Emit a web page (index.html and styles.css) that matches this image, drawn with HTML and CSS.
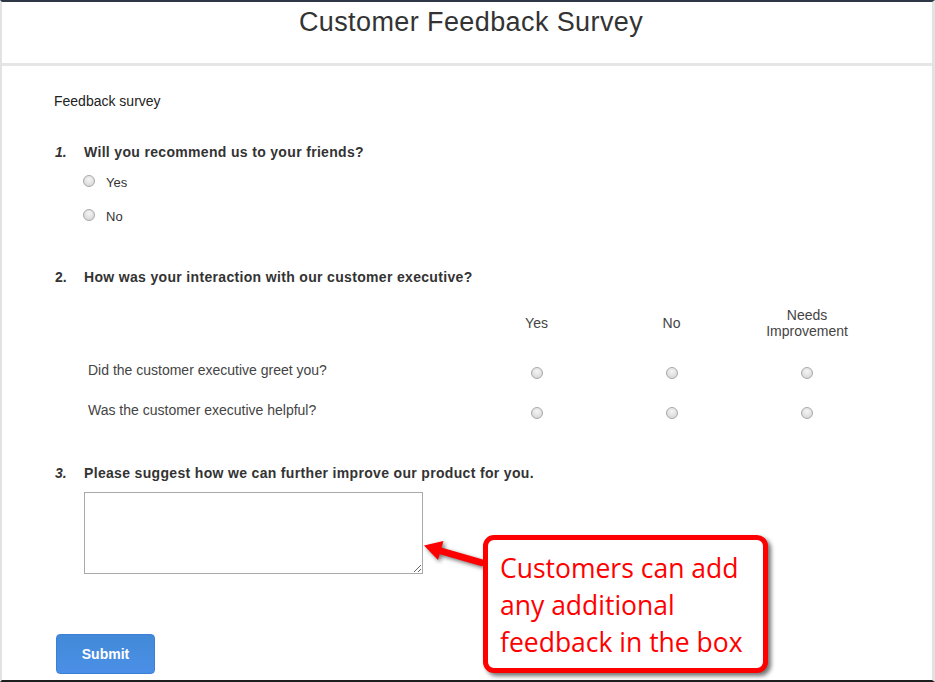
FILE: index.html
```html
<!DOCTYPE html>
<html>
<head>
<meta charset="utf-8">
<link rel="stylesheet" href="styles.css">
</head>
<body>
<div class="window">
  <header class="header"><h1 class="title">Customer Feedback Survey</h1></header>
  <main class="content">
    <p class="intro">Feedback survey</p>

    <section class="question q1">
      <div class="qline"><span class="num">1.</span><span class="qtext">Will you recommend us to your friends?</span></div>
      <div class="options">
        <label class="option"><input type="radio" class="radio" name="q1"><span>Yes</span></label>
        <label class="option"><input type="radio" class="radio" name="q1"><span>No</span></label>
      </div>
    </section>

    <section class="question q2">
      <div class="qline"><span class="num upright">2.</span><span class="qtext">How was your interaction with our customer executive?</span></div>
      <div class="matrix">
        <div class="mhead"></div>
        <div class="mhead">Yes</div>
        <div class="mhead">No</div>
        <div class="mhead">Needs<br>Improvement</div>

        <div class="mlabel">Did the customer executive greet you?</div>
        <div class="mcell"><input type="radio" class="radio" name="r1"></div>
        <div class="mcell"><input type="radio" class="radio" name="r1"></div>
        <div class="mcell"><input type="radio" class="radio" name="r1"></div>

        <div class="mlabel">Was the customer executive helpful?</div>
        <div class="mcell"><input type="radio" class="radio" name="r2"></div>
        <div class="mcell"><input type="radio" class="radio" name="r2"></div>
        <div class="mcell"><input type="radio" class="radio" name="r2"></div>
      </div>
    </section>

    <section class="question q3">
      <div class="qline"><span class="num">3.</span><span class="qtext">Please suggest how we can further improve our product for you.</span></div>
      <textarea class="answer"></textarea>
    </section>

    <button class="submit" type="button">Submit</button>
  </main>

  <svg class="arrow" width="80" height="40" viewBox="415 535 80 40">
    <line x1="481" y1="562.5" x2="441" y2="551" stroke="#ff0000" stroke-width="7" stroke-linecap="round"/>
    <polygon points="424,545.5 443.5,541 438,560" fill="#ff0000"/>
  </svg>
  <div class="callout">Customers can add any additional feedback in the box</div>
</div>
</body>
</html>
```

FILE: styles.css
```css
* { box-sizing: border-box; }
html, body { margin: 0; padding: 0; background: #fff; }
body { font-family: "Liberation Sans", Arial, sans-serif; color: #333; }

.window {
  position: relative;
  width: 935px;
  height: 682px;
  overflow: hidden;
  border-top: 2px solid #2d3745;
  border-bottom: 2px solid #1e1e1e;
  border-left: 2px solid #e2e2e2;
  border-right: 3px solid #e2e2e2;
}

.header {
  height: 64px;
  border-bottom: 3px solid #e6e6e6;
  padding-top: 5px;
  padding-left: 8px;
}
.title {
  margin: 0;
  text-align: center;
  font-weight: normal;
  font-size: 27px;
  letter-spacing: 0.4px;
  line-height: 30px;
  color: #333;
}

.content {
  padding: 25px 0 0 52px;
}
.intro {
  margin: 0;
  font-size: 14px;
  line-height: 20px;
  color: #222;
}

.question { margin-top: 31px; }
.q2 { margin-top: 40px; }
.q3 { margin-top: 32px; }

.qline {
  display: flex;
  font-size: 14px;
  line-height: 20px;
  font-weight: bold;
  letter-spacing: 0.33px;
  color: #333;
}
.num {
  width: 30px;
  padding-left: 1px;
  font-style: italic;
  letter-spacing: 0;
}
.num.upright { font-style: normal; }

.options {
  display: flex;
  flex-direction: column;
  gap: 14px;
  margin-top: 11px;
  padding-left: 29px;
}
.option {
  display: flex;
  align-items: center;
  height: 20px;
  font-size: 13px;
  line-height: 20px;
  color: #333;
}
.option .radio { margin-top: -4px; }
.option span { margin-left: 11px; }

.radio {
  appearance: none;
  -webkit-appearance: none;
  margin: 0;
  width: 12px;
  height: 12px;
  border-radius: 50%;
  border: 1px solid #a8a8a8;
  background: radial-gradient(circle at 50% 35%, #f4f4f4 0%, #dcdcdc 70%, #cfcfcf 100%);
}

.matrix {
  display: grid;
  grid-template-columns: 381px 135px 135px 136px;
  grid-template-rows: 56px 40px 40px;
  margin-top: 8px;
  padding-left: 34px;
  align-items: center;
}
.mhead {
  text-align: center;
  font-size: 14px;
  line-height: 16px;
  color: #444;
}
.mlabel {
  font-size: 14px;
  line-height: 20px;
  color: #444;
  padding-bottom: 2px;
}
.mcell {
  display: flex;
  justify-content: center;
  padding-top: 3px;
}

.answer {
  display: block;
  margin: 9px 0 0 30px;
  width: 339px;
  height: 82px;
  border: 1px solid #a9a9a9;
  resize: both;
  padding: 2px;
  font-family: "Liberation Sans", Arial, sans-serif;
}

.submit {
  display: block;
  margin: 60px 0 0 2px;
  width: 99px;
  height: 40px;
  border: 1px solid #3b7fd6;
  border-radius: 4px;
  background: linear-gradient(#428ad8, #4a8fe6);
  color: #fff;
  font-family: "Liberation Sans", Arial, sans-serif;
  font-size: 14px;
  font-weight: bold;
}

.arrow {
  position: absolute;
  left: 413px;
  top: 533px;
  filter: drop-shadow(2px 2px 2px rgba(0,0,0,0.55));
}

.callout {
  position: absolute;
  left: 481px;
  top: 533px;
  width: 285px;
  height: 138px;
  border: 5px solid #ff0000;
  border-radius: 11px;
  background: #fff;
  box-shadow: 3px 3px 4px rgba(0,0,0,0.55);
  padding: 10px 0 0 12px;
  font-family: "Open Sans", "Noto Sans", sans-serif;
  font-size: 26.5px;
  line-height: 37px;
  color: #ff0000;
}
```
